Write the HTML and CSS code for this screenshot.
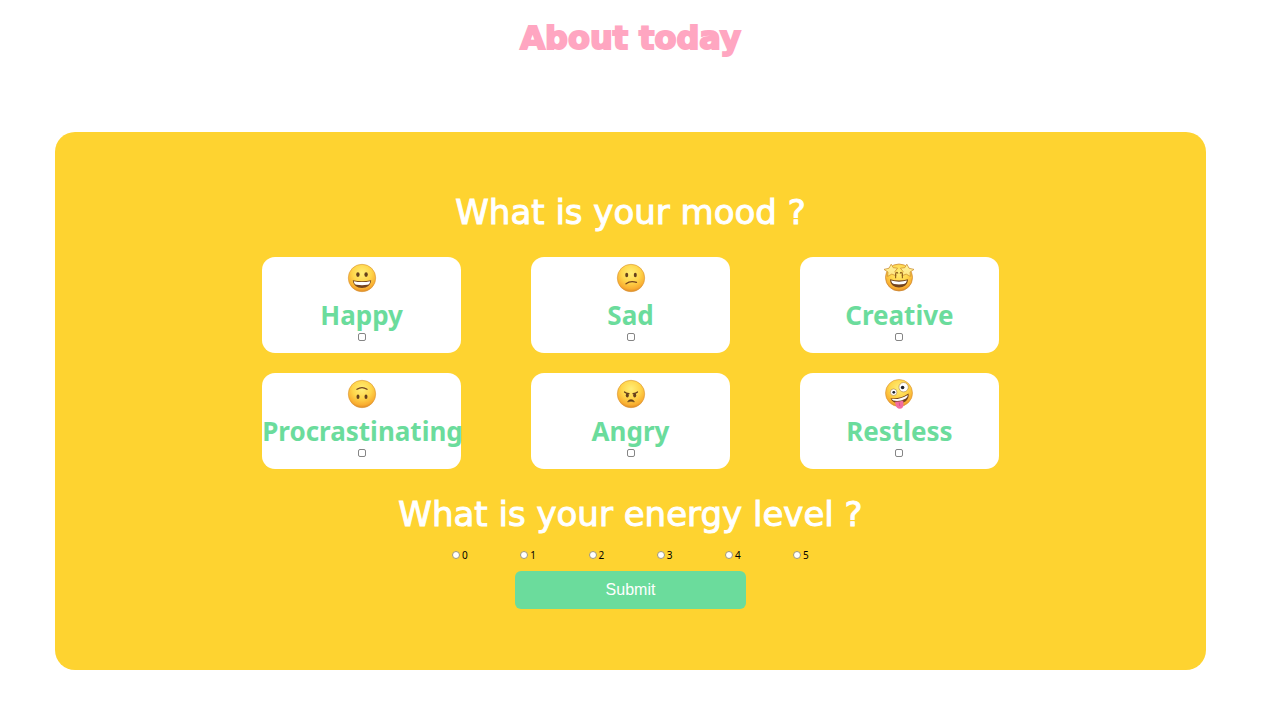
FILE: index.html
```html
<!DOCTYPE html>
<html lang="en">
<head>
<meta charset="utf-8">
<meta name="viewport" content="width=device-width, initial-scale=1">
<title>About today</title>
<link rel="stylesheet" href="styles.css">
</head>
<body>
<svg class="defs" aria-hidden="true">
  <defs>
    <radialGradient id="skin" cx="50%" cy="32%" r="68%">
      <stop offset="0" stop-color="#ffee78"/>
      <stop offset=".5" stop-color="#ffd64b"/>
      <stop offset=".85" stop-color="#f9ae31"/>
      <stop offset="1" stop-color="#e08a25"/>
    </radialGradient>
    <linearGradient id="star" x1="0" y1="0" x2="0" y2="1">
      <stop offset="0" stop-color="#fff3a0"/>
      <stop offset="1" stop-color="#ffe680"/>
    </linearGradient>
  </defs>
</svg>
<header class="header">
  <h1 class="title">About today</h1>
</header>
<main class="main">
  <form class="panel">
    <h2 class="question" id="mood">What is your mood ?</h2>
    <div class="moods" role="group" aria-labelledby="mood">
      <label class="card">
        <svg class="face" viewBox="0 0 32 32" aria-hidden="true">
          <circle cx="16" cy="16" r="13.700" fill="url(#skin)" stroke="#d99535" stroke-width=".6"/>
          <ellipse cx="11.900" cy="12.600" rx="1.700" ry="2.300" fill="#65401c"/>
          <ellipse cx="20.100" cy="12.600" rx="1.700" ry="2.300" fill="#65401c"/>
          <path d="M6.800 18.300Q16 20 25.200 18.300C24.800 23.200 21 26 16 26S7.200 23.200 6.800 18.300Z" fill="#74431d"/>
          <path d="M7.800 19.200Q16 20.900 24.200 19.200Q23.800 22.600 21.400 22.800Q16 23.500 10.600 22.800Q8.200 22.600 7.800 19.200Z" fill="#fff"/>
        </svg>
        <span class="name">Happy</span>
        <input class="check" type="checkbox" name="mood" value="happy">
      </label>
      <label class="card">
        <svg class="face" viewBox="0 0 32 32" aria-hidden="true">
          <circle cx="16" cy="16" r="13.700" fill="url(#skin)" stroke="#d99535" stroke-width=".6"/>
          <ellipse cx="11.700" cy="13" rx="1.500" ry="2.200" fill="#65401c"/>
          <ellipse cx="20.300" cy="13" rx="1.500" ry="2.200" fill="#65401c"/>
          <path d="M11 21.800Q15.500 18.200 21.500 20.400" fill="none" stroke="#74431d" stroke-width="1.300" stroke-linecap="round"/>
        </svg>
        <span class="name">Sad</span>
        <input class="check" type="checkbox" name="mood" value="sad">
      </label>
      <label class="card">
        <svg class="face" viewBox="0 0 32 32" aria-hidden="true">
          <circle cx="16" cy="15.500" r="13.500" fill="url(#skin)" stroke="#c9822c" stroke-width=".7"/>
          <path d="M7 17.300Q16 19.800 25 17.300C24.800 23 20.800 25.400 16 25.400S7.200 23 7 17.300Z" fill="#74431d"/>
          <path d="M8 18.600Q16 20.900 24 18.600Q23.300 21.600 21 22Q16 22.800 11 22Q8.700 21.600 8 18.600Z" fill="#fff"/>
          <path id="eye" d="M8.200 2.200L10.200 5.700L14.600 6.200L12 9.400L13.200 13.800L8.800 12.100L4.600 14.400L5 10.100L1 7.400L6 6.200Z" fill="url(#star)" stroke="#c98a2b" stroke-width=".7" stroke-linejoin="round"/>
          <use href="#eye" transform="matrix(-1 0 0 1 32 0)"/>
          <path d="M12.600 16.200V12.200Q13.500 9 15 11.500M19.400 16.200V12.200Q18.500 9 17 11.500" fill="none" stroke="#8f601e" stroke-width="1.100"/>
        </svg>
        <span class="name">Creative</span>
        <input class="check" type="checkbox" name="mood" value="creative">
      </label>
      <label class="card">
        <svg class="face" viewBox="0 0 32 32" aria-hidden="true">
          <circle cx="16" cy="16" r="13.700" fill="url(#skin)" stroke="#d99535" stroke-width=".6"/>
          <path d="M11 11.300Q16 7.800 21 11.300" fill="none" stroke="#74431d" stroke-width="1.300" stroke-linecap="round"/>
          <ellipse cx="12" cy="18.800" rx="1.500" ry="2.300" fill="#65401c"/>
          <ellipse cx="20" cy="18.800" rx="1.500" ry="2.300" fill="#65401c"/>
        </svg>
        <span class="name">Procrastinating</span>
        <input class="check" type="checkbox" name="mood" value="procrastinating">
      </label>
      <label class="card">
        <svg class="face" viewBox="0 0 32 32" aria-hidden="true">
          <circle cx="16" cy="16" r="13.700" fill="url(#skin)" stroke="#d99535" stroke-width=".6"/>
          <ellipse cx="12.300" cy="17.200" rx="1.500" ry="2.200" fill="#65401c"/>
          <ellipse cx="19.700" cy="17.200" rx="1.500" ry="2.200" fill="#65401c"/>
          <path d="M9.500 14Q11 15.600 14 15.700M22.500 14Q21 15.600 18 15.700" fill="none" stroke="#65401c" stroke-width="1.200" stroke-linecap="round"/>
          <path d="M12.500 24Q13.500 21.600 16 21.600T19.500 24Q16 22.600 12.500 24Z" fill="#65401c" stroke="#65401c" stroke-width=".5"/>
        </svg>
        <span class="name">Angry</span>
        <input class="check" type="checkbox" name="mood" value="angry">
      </label>
      <label class="card">
        <svg class="face" viewBox="0 0 32 32" aria-hidden="true">
          <circle cx="16" cy="15" r="13.500" fill="url(#skin)" stroke="#d99535" stroke-width=".6"/>
          <circle cx="20.600" cy="9.200" r="4.700" fill="#fff" stroke="#a98144" stroke-width=".6"/>
          <circle cx="19.600" cy="9.500" r="1.800" fill="#20232d"/>
          <circle cx="10.600" cy="14.200" r="3.300" fill="#fff" stroke="#a98144" stroke-width=".6"/>
          <circle cx="10.800" cy="14.300" r="1.400" fill="#20232d"/>
          <path d="M7.500 20.200Q17 21.300 25.500 15.500C26.500 21 22.500 24.700 17.500 25.300S9 23.800 7.500 20.200Z" fill="#74431d"/>
          <path d="M8.500 20.900Q17 21.800 24.800 16.900Q24.700 19.500 22.500 20.800Q16 24 10.300 22.500Z" fill="#fff"/>
          <path d="M12 23.700Q16 23.800 20.200 22.400L20.500 27Q20.200 30.700 16.800 30.800Q13.500 30.500 12.800 27.500Z" fill="#f26ca0"/>
          <path d="M16.200 24.500L16.800 28" stroke="#d34a81" stroke-width=".8"/>
        </svg>
        <span class="name">Restless</span>
        <input class="check" type="checkbox" name="mood" value="restless">
      </label>
    </div>
    <h2 class="question" id="energy">What is your energy level ?</h2>
    <div class="levels" role="radiogroup" aria-labelledby="energy">
      <label class="level"><input class="radio" type="radio" name="energy" value="0">0</label>
      <label class="level"><input class="radio" type="radio" name="energy" value="1">1</label>
      <label class="level"><input class="radio" type="radio" name="energy" value="2">2</label>
      <label class="level"><input class="radio" type="radio" name="energy" value="3">3</label>
      <label class="level"><input class="radio" type="radio" name="energy" value="4">4</label>
      <label class="level"><input class="radio" type="radio" name="energy" value="5">5</label>
    </div>
    <button class="submit" type="submit">Submit</button>
  </form>
</main>
</body>
</html>
```
FILE: styles.css
```css
* {
  box-sizing: border-box;
}

body {
  margin: 0;
  padding: 0 74px 40px 55px;
  background: #fff;
  color: #000;
  font-family: "Noto Sans", "Open Sans", sans-serif;
}

.defs {
  position: absolute;
  width: 0;
  height: 0;
}

.header {
  padding: 14px 0 70px;
}

.title {
  margin: 0;
  color: #ffa6c1;
  font-family: "DejaVu Sans", sans-serif;
  font-size: 32px;
  font-weight: 700;
  line-height: 48px;
  text-align: center;
  -webkit-text-stroke: 2px #ffa6c1;
}

.panel {
  display: flex;
  flex-direction: column;
  align-items: center;
  padding: 56px 0 61px;
  border-radius: 20px;
  background: #fed330;
}

.question {
  margin: 0;
  color: #fff;
  font-family: "DejaVu Sans", sans-serif;
  font-size: 34px;
  font-weight: 400;
  line-height: 48px;
  text-align: center;
  -webkit-text-stroke: 1px #fff;
}

.moods {
  display: grid;
  grid-template-columns: repeat(3, 27%);
  justify-content: space-between;
  row-gap: 20px;
  width: 64%;
  margin: 21px 0;
}

.card {
  min-width: 0;
  padding: 5px 0 12px;
  border-radius: 13px;
  background: #fff;
  text-align: center;
}

.face {
  display: block;
  width: 32px;
  height: 32px;
  margin: 0 auto 5px;
}

.name {
  display: block;
  color: #6bdc9c;
  font-size: 26px;
  font-weight: 700;
  line-height: 32px;
  white-space: nowrap;
}

.check,
.radio {
  display: block;
  width: 8px;
  height: 8px;
  margin: 0;
  border: 1px solid #858585;
  background: #fff;
  appearance: none;
}

.check {
  margin: 2px auto 0;
  border-radius: 2px;
}

.radio {
  border-color: #a09878;
  border-radius: 50%;
}

.check:checked,
.radio:checked {
  background: #2f7de1;
}

.levels {
  display: flex;
  justify-content: space-between;
  width: 31%;
  margin: 11px 0 10px;
}

.level {
  display: flex;
  align-items: center;
  gap: 2px;
  font-size: 10px;
  line-height: 12px;
}

.submit {
  width: 20%;
  padding: 9px 12px;
  border: 0;
  border-radius: 6px;
  background: #6bdc9c;
  color: #fff;
  font-family: "Liberation Sans", Arial, sans-serif;
  font-size: 16px;
  line-height: 20px;
}
```
